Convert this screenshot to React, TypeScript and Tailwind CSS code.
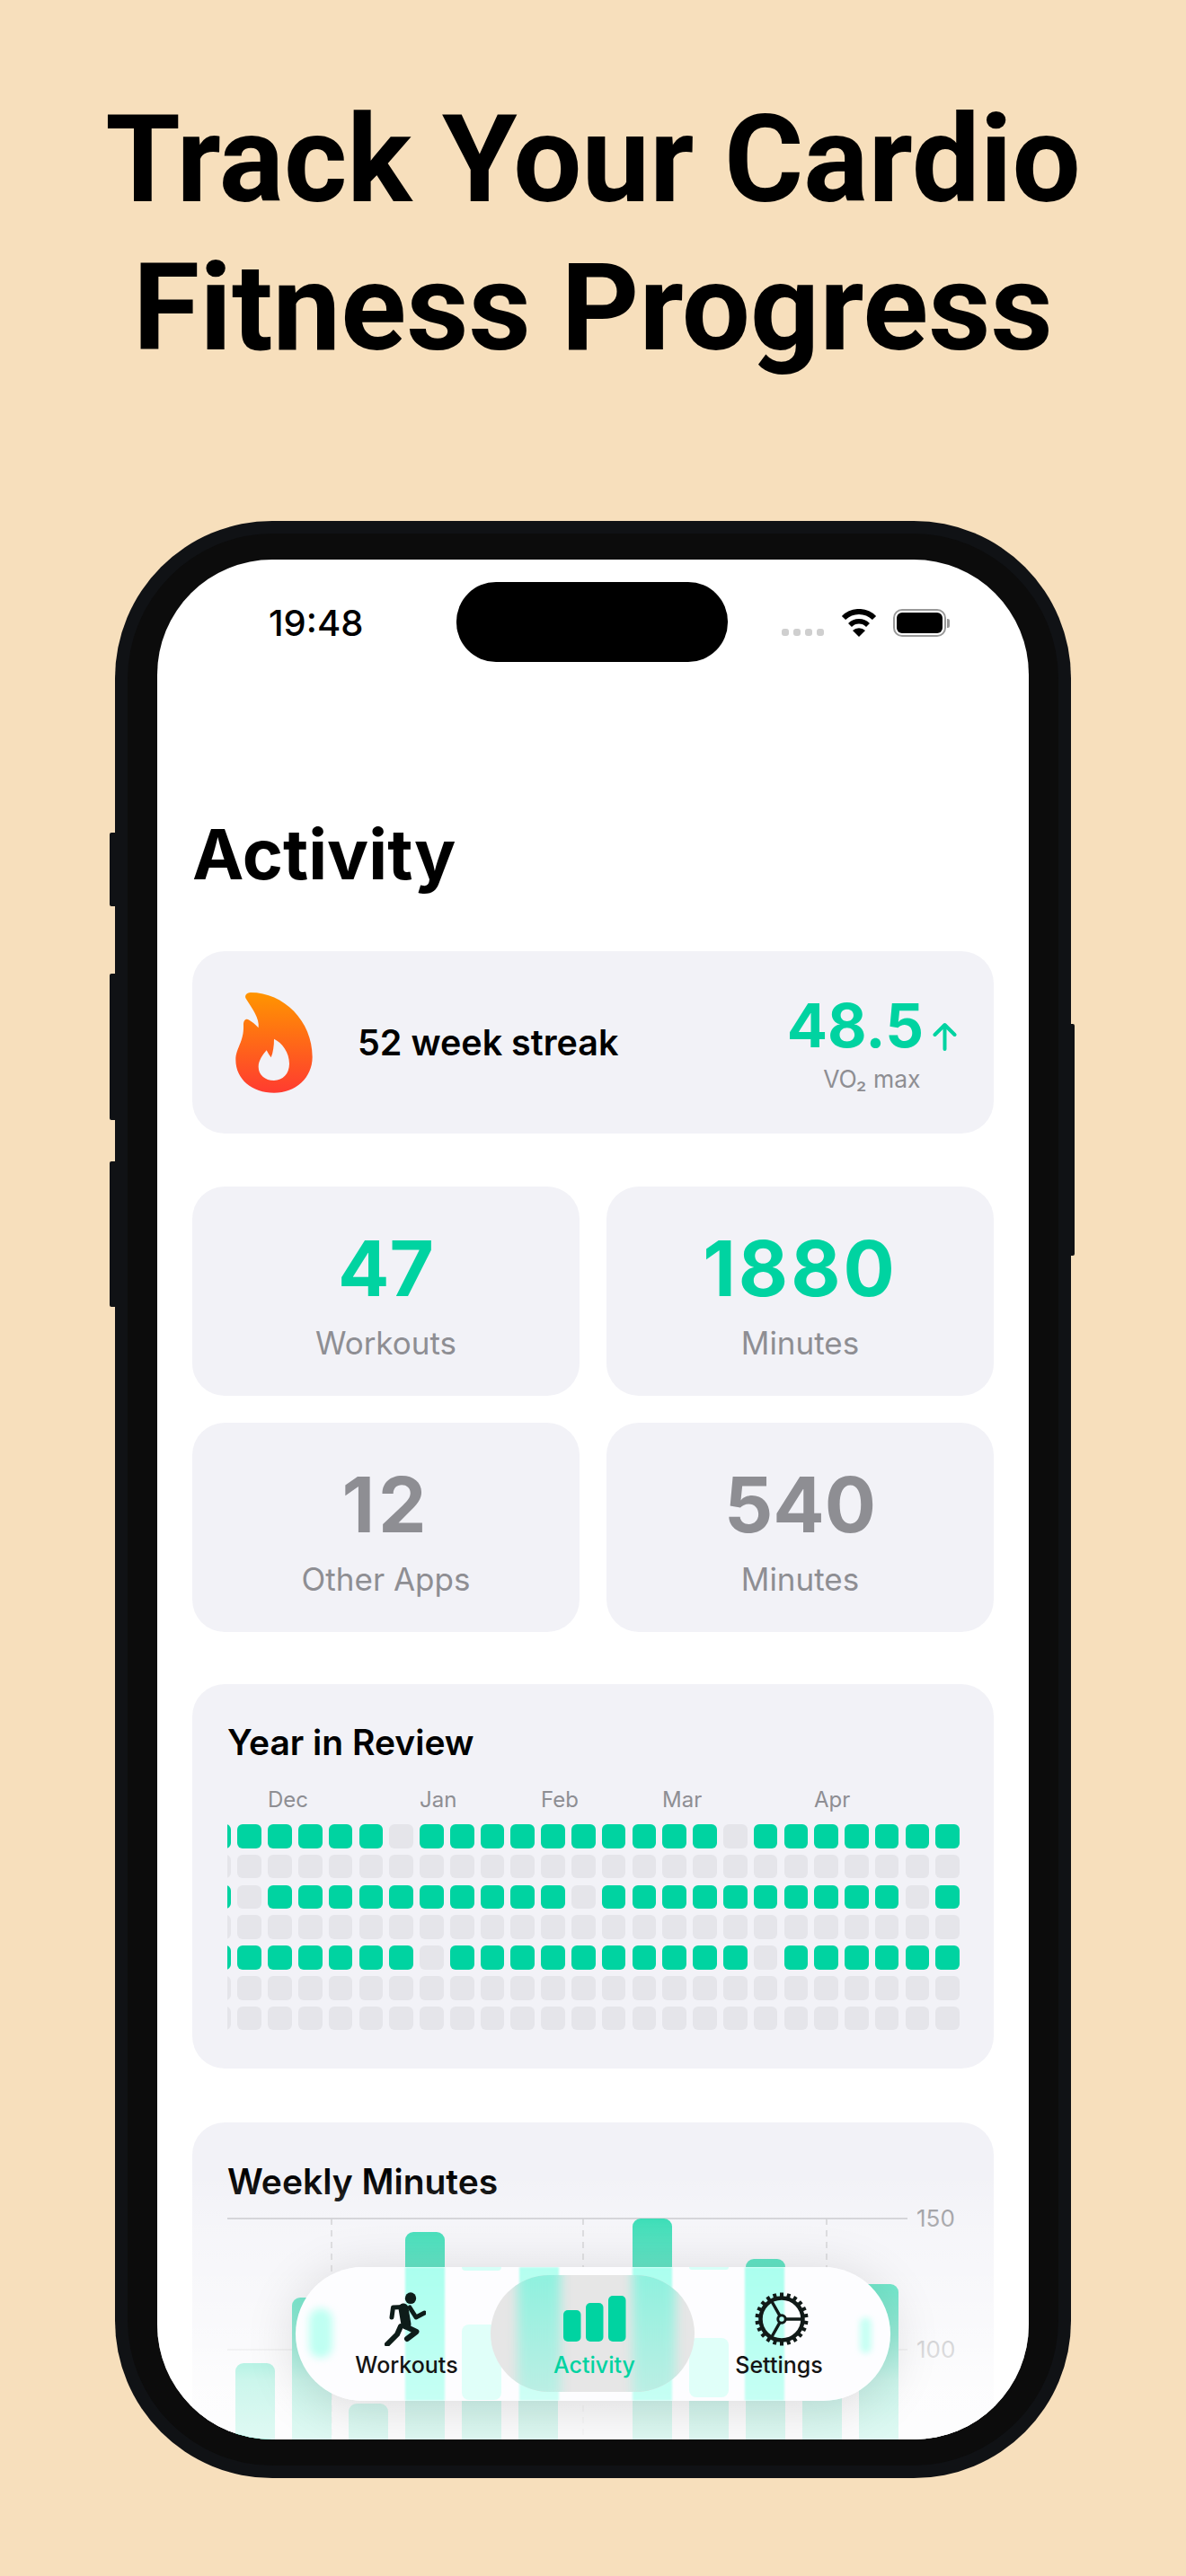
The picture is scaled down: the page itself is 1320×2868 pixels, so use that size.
import React from "react";

const G = "#00D3A1";
const rows: string[] = [
  "1" + "11111" + "0" + "1111111111" + "0" + "1111111",
  "0".repeat(25),
  "1" + "0" + "1111111111" + "0" + "1111111111" + "0" + "1",
  "0".repeat(25),
  "1" + "111111" + "0" + "1111111111" + "0" + "111111",
  "0".repeat(25),
  "0".repeat(25),
];

const bars: [number, number][] = [
  [9, 161], [72, 88], [135, 206], [198, 15], [261, 117], [324, 62],
  [451, 0], [514, 132], [577, 45], [640, 62], [703, 73],
];

function Flame() {
  return (
    <svg width="86" height="112" viewBox="0 0 256 336" className="shrink-0">
      <defs>
        <linearGradient id="fl" x1="0" y1="0" x2="0" y2="1">
          <stop offset="0" stopColor="#FF9500" />
          <stop offset="1" stopColor="#FF3B30" />
        </linearGradient>
      </defs>
      <path
        fill="url(#fl)"
        fillRule="evenodd"
        d="M35 22 C28 12 35 0 50 0 C160 0 256 95 256 215 C256 285 200 335 128 335 C55 335 0 290 0 225 C0 185 28 165 26 110 C25 92 35 84 45 92 C55 98 68 108 76 118 C80 85 55 55 35 22 Z M128 155 C155 168 179 200 179 238 C179 272 157 294 128 294 C98 294 76 275 76 248 C76 228 90 208 103 193 C108 203 113 210 118 217 C125 200 128 178 128 155 Z"
      />
    </svg>
  );
}

function Wifi() {
  return (
    <svg width="40" height="31" viewBox="0 0 40 31" fill="none">
      <path d="M3 10 A 24 24 0 0 1 37 10" stroke="#000" strokeWidth="6" />
      <path d="M10 18 A 14 14 0 0 1 30 18" stroke="#000" strokeWidth="5.5" />
      <path d="M20 31 L13 24 A 10 10 0 0 1 27 24 Z" fill="#000" />
    </svg>
  );
}

function Runner() {
  return (
    <svg width="46" height="60" viewBox="0 0 46 60" fill="none" stroke="#0E1C19" strokeLinecap="round" strokeLinejoin="round">
      <ellipse cx="29" cy="6.7" rx="6.2" ry="6.4" fill="#0E1C19" stroke="none" />
      <path d="M21 18 L24 36" strokeWidth="11" />
      <path d="M22 16.5 L9.5 17 L8 28" strokeWidth="5" />
      <path d="M28 17 L35 28 L44.5 23" strokeWidth="5" />
      <path d="M23 38 L35.5 44 L25 52" strokeWidth="6" />
      <path d="M18 38 L14 47 L3 58" strokeWidth="6" />
    </svg>
  );
}

function Gear() {
  return (
    <svg width="60" height="60" viewBox="0 0 60 60" fill="none" stroke="#111A18">
      {Array.from({ length: 22 }).map((_, i) => (
        <rect key={i} x="28" y="0.5" width="4" height="6" fill="#111A18" stroke="none" transform={`rotate(${(i * 360) / 22} 30 30)`} />
      ))}
      <circle cx="30" cy="30" r="23.5" strokeWidth="4.5" />
      <circle cx="30" cy="30" r="4.2" strokeWidth="3" />
      <path d="M34 30 H54 M28 26.4 L18.5 9.5 M28 33.6 L18.5 50.5" strokeWidth="3.4" />
    </svg>
  );
}

function NavBars() {
  return (
    <svg width="70" height="51" viewBox="0 0 70 51" fill={G}>
      <rect x="0" y="16" width="19.5" height="35" rx="5" />
      <rect x="25" y="8" width="19.5" height="43" rx="5" />
      <rect x="50" y="0" width="19.5" height="51" rx="5" />
    </svg>
  );
}

function Stat({ value, label, className }: { value: string; label: string; className: string }) {
  return (
    <div className="flex flex-col items-center rounded-[36px] bg-[#F2F2F7] pt-[49px]">
      <div className={`text-[85px] leading-none font-bold ${className}`}>{value}</div>
      <div className="mt-[20px] text-[35px] leading-[40px] text-[#8E8E93]">{label}</div>
    </div>
  );
}

export default function App() {
  return (
    <div className="relative flex h-[2868px] w-[1320px] flex-col items-center overflow-hidden bg-[#F7DFBC] font-['Inter',sans-serif]">
      <h1 className="mt-[96px] text-center font-['Roboto',sans-serif] text-[135px] leading-[165px] font-bold whitespace-nowrap text-black">
        Track Your Cardio
        <br />
        Fitness Progress
      </h1>

      <div className="relative mt-[154px] h-[2179px] w-[1064px] shrink-0 rounded-[175px] bg-[#101215] p-[14px]">
        <div className="absolute top-[347px] left-[-6px] h-[82px] w-[6px] rounded-l-[2px] bg-[#101215]" />
        <div className="absolute top-[504px] left-[-6px] h-[163px] w-[6px] rounded-l-[2px] bg-[#101215]" />
        <div className="absolute top-[713px] left-[-6px] h-[162px] w-[6px] rounded-l-[2px] bg-[#101215]" />
        <div className="absolute top-[560px] right-[-4px] h-[258px] w-[4px] rounded-r-[2px] bg-[#101215]" />

        <div className="h-full w-full rounded-[162px] bg-[#0C0C0C] px-[33px] py-[29px]">
          <div className="relative h-full w-full overflow-hidden rounded-[128px] bg-white">
            <div className="flex h-[114px] items-start pt-[25px]">
              <div className="w-[333px] pt-[22px] pl-[124px] text-[40px] leading-[48px] font-medium text-black">19:48</div>
              <div className="h-[89px] w-[302px] rounded-[44px] bg-black" />
              <div className="flex items-start pt-[30px] pl-[60px]">
                <div className="mt-[22px] flex gap-[5px]">
                  <div className="h-[8px] w-[8px] rounded-[3px] bg-[#CFCFCF]" />
                  <div className="h-[8px] w-[8px] rounded-[3px] bg-[#CFCFCF]" />
                  <div className="h-[8px] w-[8px] rounded-[3px] bg-[#CFCFCF]" />
                  <div className="h-[8px] w-[8px] rounded-[3px] bg-[#CFCFCF]" />
                </div>
                <div className="ml-[19px]">
                  <Wifi />
                </div>
                <div className="ml-[18px] flex items-center">
                  <div className="h-[31px] w-[59px] rounded-[10px] border-[2.5px] border-[#999999] p-[2px]">
                    <div className="h-full w-full rounded-[6px] bg-black" />
                  </div>
                  <div className="ml-[1px] h-[10px] w-[3px] rounded-r-[2px] bg-[#999999]" />
                </div>
              </div>
            </div>

            <div className="px-[39px]">
              <h2 className="mt-[176px] text-[77px] leading-none font-bold text-black">Activity</h2>

              <div className="mt-[69px] flex h-[203px] items-center rounded-[36px] bg-[#F2F2F7] pr-[41px] pl-[48px]">
                <Flame />
                <div className="ml-[50px] flex-1 pt-[3px] text-[39.5px] leading-none font-semibold text-black">52 week streak</div>
                <div className="flex flex-col items-center pt-[3px]">
                  <div className="flex items-end">
                    <span className="text-[67px] leading-none font-bold text-[#00D3A1]">48.5</span>
                    <svg width="27" height="32" viewBox="0 0 27 32" fill="none" stroke={G} strokeWidth="4" strokeLinecap="round" strokeLinejoin="round" className="mb-[5px] ml-[10px]">
                      <path d="M13.5 30 V3 M2.5 14 L13.5 3 L24.5 14" />
                    </svg>
                  </div>
                  <div className="mt-[11px] text-[26.5px] leading-[30px] text-[#8E8E93]">VO₂ max</div>
                </div>
              </div>

              <div className="mt-[59px] grid grid-cols-2 auto-rows-[233px] gap-[30px]">
                <Stat value="47" label="Workouts" className="text-[#00D3A1]" />
                <Stat value="1880" label="Minutes" className="tracking-[3px] text-[#00D3A1]" />
                <Stat value="12" label="Other Apps" className="tracking-[4px] text-[#8E8E93]" />
                <Stat value="540" label="Minutes" className="text-[#8E8E93]" />
              </div>

              <div className="mt-[58px] h-[428px] rounded-[36px] bg-[#F2F2F7] pt-[45px] pr-[38px] pl-[39px]">
                <div className="text-[39px] leading-none font-semibold text-black">Year in Review</div>
                <div className="mt-[33px] flex text-[24px] leading-none text-[#8E8E93]">
                  <div className="w-[214px] pl-[45px]">Dec</div>
                  <div className="w-[135px]">Jan</div>
                  <div className="w-[135px]">Feb</div>
                  <div className="w-[169px]">Mar</div>
                  <div>Apr</div>
                </div>
                <div className="mt-[15px] flex flex-col gap-[7.2px] overflow-hidden">
                  {rows.map((r, i) => (
                    <div key={i} className="flex justify-end gap-[7.2px]">
                      {r.split("").map((c, j) => (
                        <div key={j} className={`h-[26.6px] w-[26.6px] shrink-0 rounded-[6px] ${c === "1" ? "bg-[#00D3A1]" : "bg-[#E5E5EA]"}`} />
                      ))}
                    </div>
                  ))}
                </div>
              </div>

              <div className="mt-[60px] h-[500px] rounded-[36px] bg-[#F2F2F7] pt-[46px] pl-[39px]">
                <div className="text-[39px] leading-none font-semibold text-black">Weekly Minutes</div>
                <div className="relative mt-[22px] h-[300px] w-[827px]">
                  <svg width="827" height="300" viewBox="0 0 827 300" className="overflow-visible">
                    <line x1="0" y1="0" x2="757" y2="0" stroke="#C9C9CE" strokeWidth="2" />
                    <line x1="0" y1="146" x2="757" y2="146" stroke="#D8D8DC" strokeWidth="2" />
                    {[116, 396, 667].map((x) => (
                      <line key={x} x1={x} y1="0" x2={x} y2="300" stroke="#C4C4C8" strokeWidth="1.5" strokeDasharray="7 6" />
                    ))}
                    {bars.map(([x, y]) => (
                      <rect key={x} x={x} y={y} width="44" height={320 - y} rx="9" fill={G} />
                    ))}
                  </svg>
                  <div className="absolute top-[-13px] left-[767px] text-[26px] leading-[26px] text-[#8E8E93]">150</div>
                  <div className="absolute top-[133px] left-[767px] text-[26px] leading-[26px] text-[#8E8E93]">100</div>
                </div>
              </div>
            </div>

            <div className="pointer-events-none absolute inset-x-0 bottom-0 h-[296px] bg-[linear-gradient(to_bottom,rgba(255,255,255,0)_0%,rgba(255,255,255,0.28)_20%,rgba(255,255,255,0.6)_61%,rgba(255,255,255,0.8)_78%,rgba(255,255,255,0.88)_100%)]" />

            <div className="absolute top-[1901px] left-[154px] h-[149px] w-[662px] rounded-full shadow-[0_8px_60px_rgba(0,0,0,0.14)]">
              <div className="relative h-full w-full overflow-hidden rounded-full bg-[#FDFDFF]">
                <div className="absolute top-[46px] left-[15px] h-[55px] w-[26px] rounded-full bg-[#BFFFF2] blur-[4px]" />
                <div className="absolute top-[56px] left-[628px] h-[40px] w-[13px] rounded-full bg-[#C8FFF4] blur-[3px]" />
                <div className="absolute top-[0px] left-[122px] h-full w-[44px] bg-[linear-gradient(to_bottom,#ABFFEF,#C6FFF4)] blur-[1px]" />
                <div className="absolute top-[0px] left-[249px] h-full w-[44px] bg-[linear-gradient(to_bottom,#B4FFF0,#CFFFF6)] blur-[1px]" />
                <div className="absolute top-[0px] left-[375px] h-full w-[44px] bg-[linear-gradient(to_bottom,#ABFFEF,#C6FFF4)] blur-[1px]" />
                <div className="absolute top-[0px] left-[500px] h-full w-[44px] bg-[linear-gradient(to_bottom,#ABFFEF,#C6FFF4)] blur-[1px]" />
                <div className="absolute top-[64px] left-[185px] h-[84px] w-[44px] rounded-[8px] bg-[#E0FFF9]" />
                <div className="absolute top-[79px] left-[438px] h-[66px] w-[44px] rounded-[8px] bg-[#E0FFF9]" />
                <div className="absolute top-[0px] left-[185px] h-[4px] w-[44px] rounded-b-[4px] bg-[#D6FFF7]" />
                <div className="absolute top-[0px] left-[438px] h-[3px] w-[44px] rounded-b-[4px] bg-[#D6FFF7]" />

                <div className="absolute top-[9px] left-[217px] h-[130px] w-[227px] overflow-hidden rounded-[65px] bg-[#E6E6E6]">
                  <div className="absolute inset-y-[-10px] left-[30px] w-[48px] bg-[linear-gradient(to_bottom,#8CF1DE,#BEEEE4)] blur-[6px]" />
                  <div className="absolute inset-y-[-10px] left-[158px] w-[48px] bg-[linear-gradient(to_bottom,#8CF1DE,#BEEEE4)] blur-[6px]" />
                </div>
              </div>

              <div className="absolute inset-0 flex pl-[19px]">
                <div className="flex w-[209px] flex-col items-center pt-[28px]">
                  <div className="mr-[4px] h-[60px]">
                    <Runner />
                  </div>
                  <div className="mt-[6px] text-[25px] leading-[30px] font-medium text-[#141414]">Workouts</div>
                </div>
                <div className="flex w-[209px] flex-col items-center pt-[32px]">
                  <div className="h-[56px]">
                    <NavBars />
                  </div>
                  <div className="mt-[6px] text-[25px] leading-[30px] font-medium text-[#00D3A1]">Activity</div>
                </div>
                <div className="flex w-[202px] flex-col items-center pt-[28px]">
                  <div className="ml-[6px] h-[60px]">
                    <Gear />
                  </div>
                  <div className="mt-[6px] text-[25px] leading-[30px] font-medium text-[#141414]">Settings</div>
                </div>
              </div>
            </div>
          </div>
        </div>
      </div>
    </div>
  );
}
